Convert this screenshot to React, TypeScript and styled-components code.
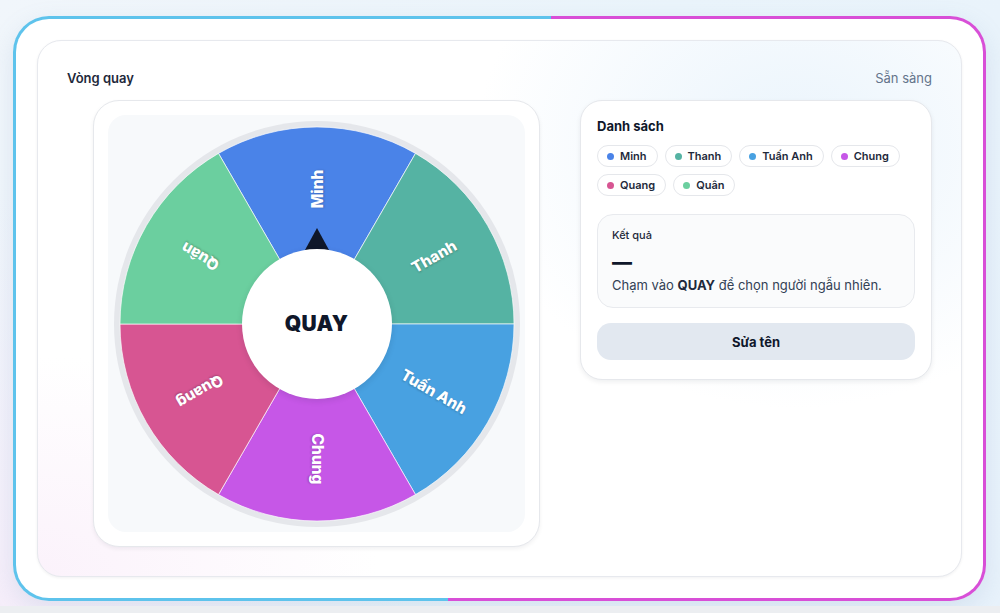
import React from 'react';
import styled, {createGlobalStyle} from "styled-components";

const GlobalStyle = createGlobalStyle`
  html, body {
    margin: 0;
    padding: 0;
    background: #eceef1;
    font-family: Inter, "Noto Sans", "Liberation Sans", sans-serif;
  }
  * {
    box-sizing: border-box;
  }
`

type Person = { name: string; color: string };

const people: Person[] = [
    {name: "Minh", color: "#4a83e8"},
    {name: "Thanh", color: "#55b3a3"},
    {name: "Tuấn Anh", color: "#48a1e1"},
    {name: "Chung", color: "#c657e7"},
    {name: "Quang", color: "#d75592"},
    {name: "Quân", color: "#6bcf9f"},
];

const R = 197;
const LABEL_R = 135;

const slicePath = (i: number, n: number) => {
    const step = (Math.PI * 2) / n;
    const a0 = i * step - step / 2;
    const a1 = a0 + step;
    const x0 = R * Math.sin(a0);
    const y0 = -R * Math.cos(a0);
    const x1 = R * Math.sin(a1);
    const y1 = -R * Math.cos(a1);
    return `M0 0 L${x0.toFixed(2)} ${y0.toFixed(2)} A${R} ${R} 0 0 1 ${x1.toFixed(2)} ${y1.toFixed(2)} Z`;
};

const Wheel = () => {
    const n = people.length;
    return (
        <WheelBox>
            <svg width="406" height="406" viewBox="-203 -203 406 406">
                <circle r="203" fill="#e5e7eb"/>
                {people.map((p, i) => (
                    <path key={p.name} d={slicePath(i, n)} fill={p.color}
                          stroke="rgba(255,255,255,0.65)" strokeWidth="1"/>
                ))}
                {people.map((p, i) => (
                    <SliceLabel key={p.name + "-t"}
                                transform={`rotate(${i * 360 / n}) translate(0 ${-LABEL_R}) rotate(-90)`}
                                textAnchor="middle" dominantBaseline="central">
                        {p.name}
                    </SliceLabel>
                ))}
            </svg>
            <Pointer/>
            <Hub>QUAY</Hub>
        </WheelBox>
    );
};

export default function App() {
    return (
        <Page>
            <GlobalStyle/>
            <Frame>
                <Panel>
                    <Header>
                        <Title>Vòng quay</Title>
                        <Status>Sẵn sàng</Status>
                    </Header>
                    <Columns>
                        <WheelCell>
                            <WheelCard>
                                <Stage>
                                    <Wheel/>
                                </Stage>
                            </WheelCard>
                        </WheelCell>
                        <Side>
                            <SideTitle>Danh sách</SideTitle>
                            <Chips>
                                {people.map(p => (
                                    <Chip key={p.name}>
                                        <Dot color={p.color}/>
                                        {p.name}
                                    </Chip>
                                ))}
                            </Chips>
                            <Result>
                                <ResultLabel>Kết quả</ResultLabel>
                                <ResultValue>—</ResultValue>
                                <ResultHint>Chạm vào <b>QUAY</b> để chọn người ngẫu nhiên.</ResultHint>
                            </Result>
                            <EditButton>Sửa tên</EditButton>
                        </Side>
                    </Columns>
                </Panel>
            </Frame>
        </Page>
    );
}

const Page = styled.div`
  height: 606px;
  padding: 16px 14px 0 13px;
  background: radial-gradient(circle at 0% 100%, #f6eefa 0%, rgba(246, 238, 250, 0) 35%),
  linear-gradient(120deg, #f1f6fb 0%, #eaf4fb 50%, #e8f2fb 100%);
`

const Frame = styled.div`
  width: 973px;
  height: 585px;
  padding: 21px;
  border: 3px solid transparent;
  border-radius: 36px;
  background: linear-gradient(#fff, #fff) padding-box,
  linear-gradient(100deg, #5ec3ec 50%, #d84fd7 50%) border-box;
  box-shadow: 0 8px 24px rgba(120, 150, 190, 0.18);
`

const Panel = styled.div`
  height: 100%;
  padding: 28px 29px 0;
  border: 1px solid #e7e9ee;
  border-radius: 24px;
  background: radial-gradient(ellipse 320px 260px at 82% 20%, #eaf4fc 0%, rgba(234, 244, 252, 0) 100%),
  radial-gradient(ellipse 340px 220px at 0% 100%, #fbf2fb 0%, rgba(251, 242, 251, 0) 100%),
  #fff;
  box-shadow: 0 1px 3px rgba(15, 23, 42, 0.06);
`

const Header = styled.div`
  display: flex;
  justify-content: space-between;
  align-items: center;
  height: 18px;
  margin-bottom: 13px;
`

const Title = styled.div`
  font-size: 13px;
  font-weight: 600;
  color: #1e293b;
`

const Status = styled.div`
  font-size: 13px;
  color: #64748b;
`

const Columns = styled.div`
  display: grid;
  grid-template-columns: 1fr 352px;
  gap: 14px;
  align-items: start;
`

const WheelCell = styled.div`
  display: flex;
  justify-content: center;
`

const WheelCard = styled.div`
  width: 447px;
  height: 447px;
  padding: 14px;
  border: 1px solid #e6e8ec;
  border-radius: 26px;
  background: #fff;
  box-shadow: 0 2px 4px rgba(15, 23, 42, 0.06);
`

const Stage = styled.div`
  width: 100%;
  height: 100%;
  display: flex;
  align-items: center;
  justify-content: center;
  border-radius: 18px;
  background: #f7f9fb;
`

const WheelBox = styled.div`
  position: relative;
  width: 406px;
  height: 406px;

  svg {
    display: block;
  }
`

const SliceLabel = styled.text`
  fill: #fff;
  font-family: Inter, "Noto Sans", "Liberation Sans", sans-serif;
  font-size: 15.5px;
  font-weight: 800;
  text-shadow: 0 1px 2px rgba(0, 0, 0, 0.25);
`

const Hub = styled.button`
  position: absolute;
  left: 50%;
  top: 50%;
  width: 150px;
  height: 150px;
  transform: translate(-50%, -50%);
  border: none;
  border-radius: 50%;
  background: #fff;
  box-shadow: 0 2px 6px rgba(15, 23, 42, 0.12);
  font-family: Inter, "Noto Sans", "Liberation Sans", sans-serif;
  font-size: 21px;
  font-weight: 900;
  color: #0f172a;
  letter-spacing: 0.2px;
  cursor: pointer;
`

const Pointer = styled.div`
  position: absolute;
  left: 50%;
  top: 107px;
  transform: translateX(-50%);
  width: 0;
  height: 0;
  border-left: 12px solid transparent;
  border-right: 12px solid transparent;
  border-bottom: 22px solid #0f172a;
`

const Side = styled.div`
  display: flex;
  flex-direction: column;
  padding: 16px 16px 19px;
  border: 1px solid #e6e8ec;
  border-radius: 22px;
  background: #fff;
  box-shadow: 0 2px 5px rgba(15, 23, 42, 0.07);
`

const SideTitle = styled.div`
  font-size: 13px;
  line-height: 18px;
  font-weight: 700;
  color: #0f172a;
  margin-bottom: 10px;
`

const Chips = styled.div`
  display: flex;
  flex-wrap: wrap;
  gap: 7px 7px;
  margin-bottom: 18px;
`

const Chip = styled.div`
  display: flex;
  align-items: center;
  gap: 6px;
  height: 22px;
  padding: 0 10px 0 9px;
  border: 1px solid #e5e7eb;
  border-radius: 999px;
  background: #fff;
  font-size: 11px;
  font-weight: 600;
  color: #1e293b;
`

const Dot = styled.span<{ color: string }>`
  width: 7px;
  height: 7px;
  border-radius: 50%;
  background: ${p => p.color};
`

const Result = styled.div`
  padding: 13px 14px 13px;
  border: 1px solid #e8eaee;
  border-radius: 16px;
  background: #fafbfc;
  margin-bottom: 15px;
`

const ResultLabel = styled.div`
  font-size: 11px;
  line-height: 15px;
  font-weight: 500;
  color: #1e293b;
`

const ResultValue = styled.div`
  font-size: 20px;
  line-height: 28px;
  font-weight: 800;
  color: #0f172a;
  margin-top: 5px;
`

const ResultHint = styled.div`
  font-size: 13px;
  line-height: 18px;
  color: #334155;

  b {
    font-weight: 700;
    color: #1e293b;
  }
`

const EditButton = styled.button`
  height: 37px;
  border: none;
  border-radius: 14px;
  background: #e2e8f0;
  font-family: Inter, "Noto Sans", "Liberation Sans", sans-serif;
  font-size: 13px;
  font-weight: 700;
  color: #0f172a;
  cursor: pointer;
`
